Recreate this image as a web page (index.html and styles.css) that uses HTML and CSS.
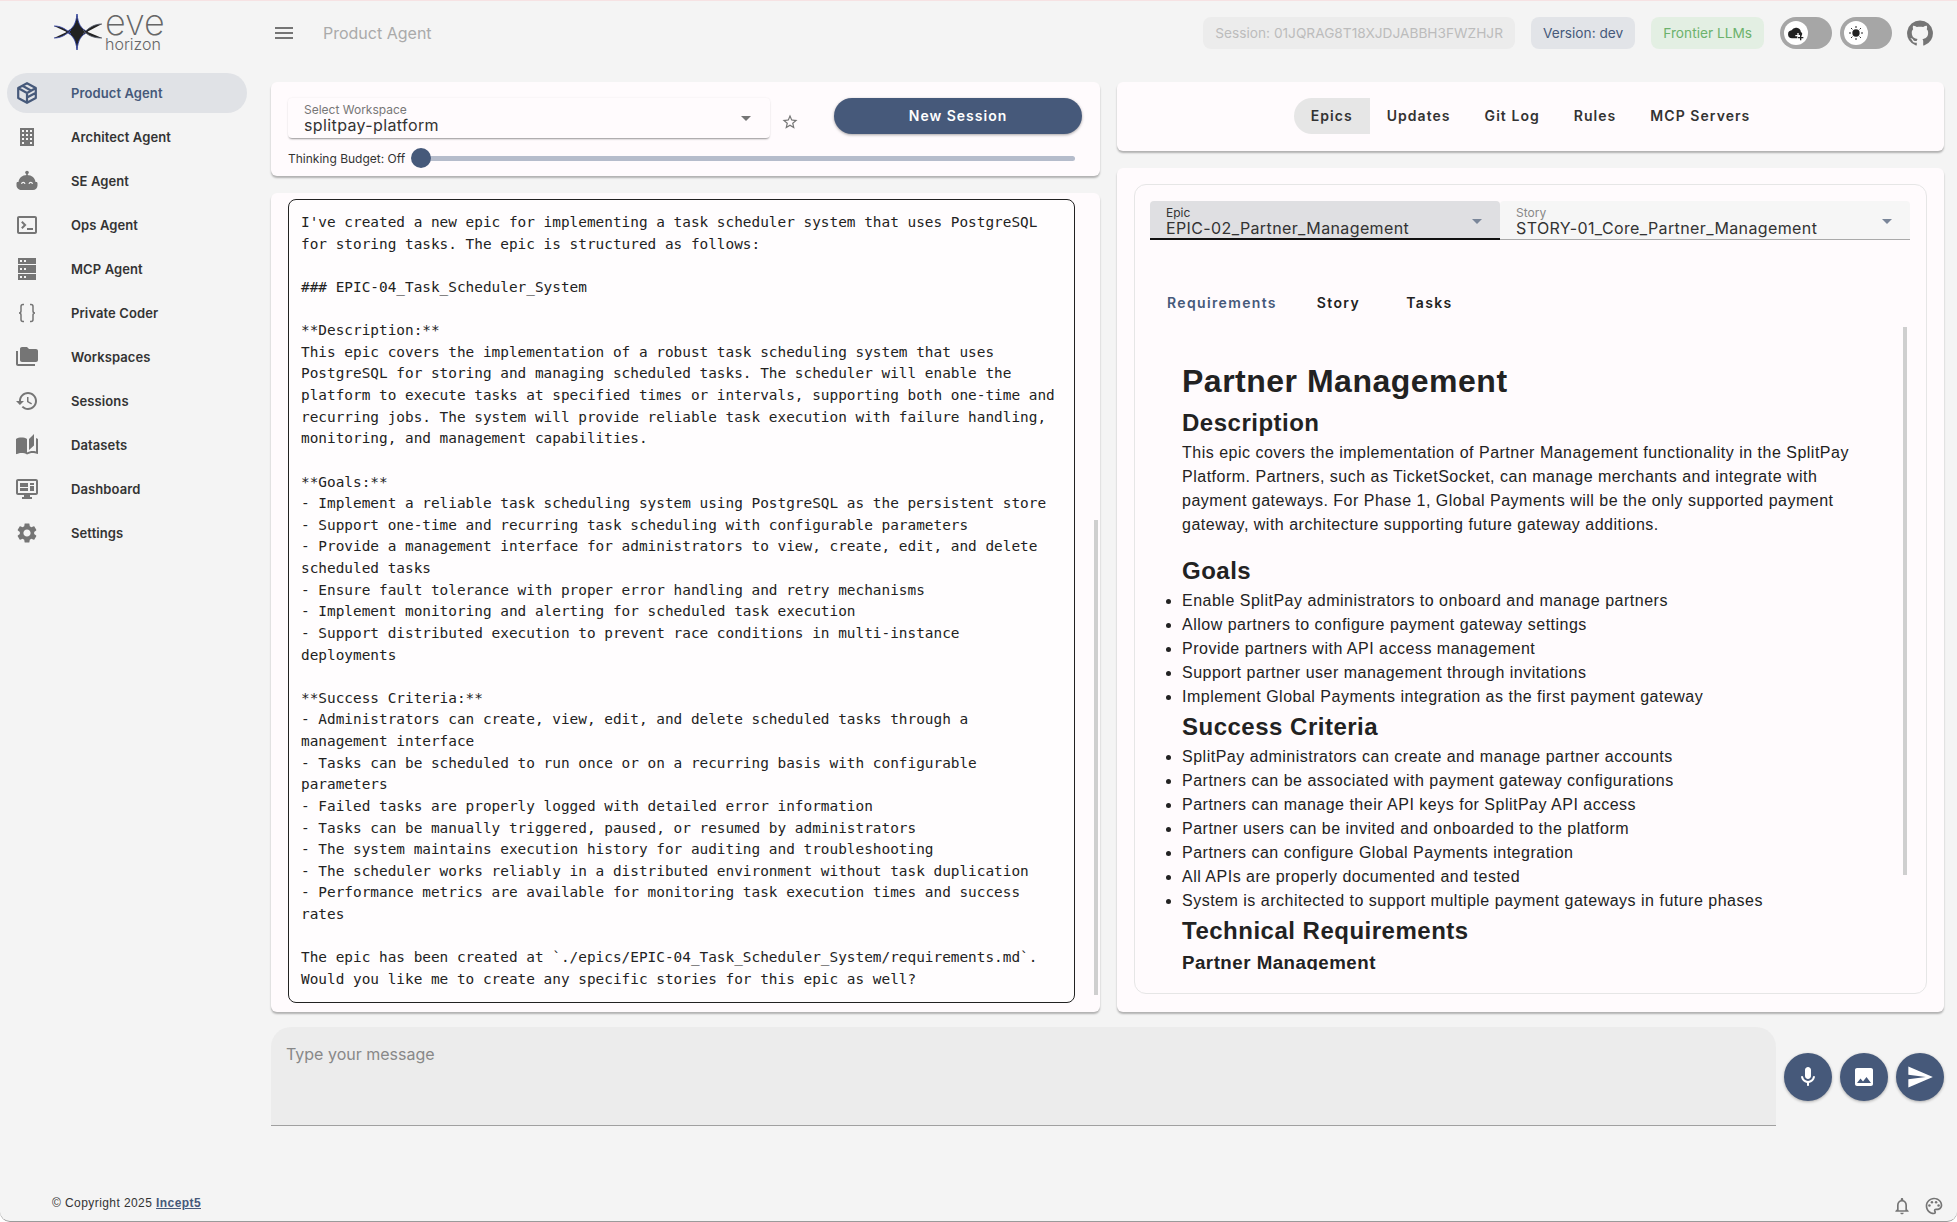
FILE: index.html
```html
<!DOCTYPE html>
<html lang="en">
<head>
<meta charset="utf-8">
<title>Eve Horizon - Product Agent</title>
<link rel="stylesheet" href="styles.css">
</head>
<body>
<div class="shell">
  <aside class="sidebar">
    <div class="logo">
      <svg class="logo-mark" viewBox="0 0 50 36" fill="none">
        <path d="M23 0C24 10 27 15 34 18C27 21 24 26 23 36C22 26 19 21 12 18C19 15 22 10 23 0Z" stroke="#2b3c9c" stroke-width=".9"/>
        <path d="M0 12C6 12 11 14 17 20" stroke="#3a49a8" stroke-width=".9"/>
        <path d="M0 24C6 24 11 22 17 16" stroke="#3a49a8" stroke-width=".9"/>
        <path d="M48 10C40 10 34 14 29 20" stroke="#555a6a" stroke-width=".9"/>
        <path d="M48 24C40 24 34 22 29 16" stroke="#555a6a" stroke-width=".9"/>
      </svg>
      <div class="logo-text">
        <span class="logo-eve">eve</span>
        <span class="logo-horizon">horizon</span>
      </div>
    </div>
    <nav class="nav">
      <a class="nav-item active">
        <svg class="nav-icon" viewBox="0 0 24 24"><path d="M12 2.200 20.800 7v10L12 21.800 3.200 17V7zM3.500 7.200 12 12l8.500-4.800M12 12v9.500M7.500 4.800l8.800 4.900M12 16.500l8-4.300" fill="none" stroke="currentColor" stroke-width="2.200" stroke-linejoin="round"/></svg>
        <span>Product Agent</span>
      </a>
      <a class="nav-item">
        <svg class="nav-icon" viewBox="0 0 24 24"><path fill-rule="evenodd" d="M5 3h14v18H5zM7 5v2h2V5zM11 5v2h2V5zM15 5v2h2V5zM7 9v2h2V9zM11 9v2h2V9zM15 9v2h2V9zM7 13v2h2v-2zM11 13v2h2v-2zM15 13v2h2v-2zM7 17v2h2v-2zM15 17v2h2v-2z"/></svg>
        <span>Architect Agent</span>
      </a>
      <a class="nav-item">
        <svg class="nav-icon" viewBox="0 0 24 24"><circle cx="12" cy="3.500" r="1.800"/><path d="M11.200 4h1.600v4h-1.600z"/><path d="M12 6c5 0 8 3 8.500 7h1.200c.3 0 .8.500.8 1.500v2c0 2.500-2 4.500-4.500 4.500H6.500C4 21 1.500 19 1.500 16.500v-2c0-1 .5-1.500.8-1.500h1.200C4 9 7 6 12 6z"/><path d="M6.500 14.800c.5-2 3-2 3.500 0M14 14.800c.5-2 3-2 3.500 0" stroke="#f4f4f4" stroke-width="1.200" fill="none"/></svg>
        <span>SE Agent</span>
      </a>
      <a class="nav-item">
        <svg class="nav-icon" viewBox="0 0 24 24"><path d="M20 3H4c-1.110 0-2 .9-2 2v14c0 1.100.89 2 2 2h16c1.100 0 2-.9 2-2V5c0-1.100-.9-2-2-2zm0 16H4V5h14v0h2v14zm-2-2h-6v-2h6v2zM7.500 16l-1.410-1.410L8.670 12 6.090 9.410 7.500 8l4 4-4 4z"/></svg>
        <span>Ops Agent</span>
      </a>
      <a class="nav-item">
        <svg class="nav-icon" viewBox="0 0 24 24"><path d="M3 23h18v-6H3v6zm2-4h2v2H5v-2zM3 1v6h18V1H3zm4 4H5V3h2v2zM3 16h18V8H3v8zm2-5h2v2H5v-2zm4-8h2v2H9V3zm0 8h2v2H9v-2zm0 8h2v2H9v-2z"/></svg>
        <span>MCP Agent</span>
      </a>
      <a class="nav-item">
        <svg class="nav-icon" viewBox="0 0 24 24"><path d="M9 3.500H8C6.500 3.500 6 4.500 6 5.500v4.500c0 1.200-.8 2-2 2 1.200 0 2 .8 2 2v4.500c0 1 .5 2 2 2h1M15 3.500h1c1.500 0 2 1 2 2v4.500c0 1.200.8 2 2 2-1.200 0-2 .8-2 2v4.500c0 1-.5 2-2 2h-1" fill="none" stroke="currentColor" stroke-width="1.500"/></svg>
        <span>Private Coder</span>
      </a>
      <a class="nav-item">
        <svg class="nav-icon" viewBox="0 0 24 24"><path d="M3 19h17v2H3c-1.100 0-2-.9-2-2V6h2v13zM23 6v9c0 1.100-.9 2-2 2H7c-1.100 0-2-.9-2-2l.01-11c0-1.100.89-2 1.990-2h5l2 2h7c1.100 0 2 .9 2 2z"/></svg>
        <span>Workspaces</span>
      </a>
      <a class="nav-item">
        <svg class="nav-icon" viewBox="0 0 24 24"><path d="M13 3c-4.970 0-9 4.030-9 9H1l3.890 3.890.07.14L9 12H6c0-3.870 3.130-7 7-7s7 3.130 7 7-3.130 7-7 7c-1.930 0-3.680-.79-4.940-2.060l-1.420 1.420C8.270 19.990 10.510 21 13 21c4.970 0 9-4.030 9-9s-4.030-9-9-9zm-1 5v5l4.280 2.540.72-1.210-3.500-2.080V8H12z"/></svg>
        <span>Sessions</span>
      </a>
      <a class="nav-item">
        <svg class="nav-icon" viewBox="0 0 24 24"><path d="M19 1l-5 5v11l5-4.500V1zM1 6v14.650c0 .25.25.5.5.5.1 0 .15-.05.25-.05C3.100 20.450 5.050 20 6.500 20c1.950 0 4.050.4 5.500 1.500V6c-1.450-1.100-3.550-1.500-5.500-1.500S2.450 4.900 1 6zm22 13.500V6c-.6-.45-1.250-.8-2-1v13.500c-1.100-.35-2.300-.5-3.500-.5-1.700 0-4.150.65-5.500 1.500v2c1.350-.85 3.800-1.500 5.500-1.500 1.650 0 3.350.3 4.750 1.050.1.05.15.05.25.05.25 0 .5-.25.5-.5v-1z"/></svg>
        <span>Datasets</span>
      </a>
      <a class="nav-item">
        <svg class="nav-icon" viewBox="0 0 24 24"><path d="M21 2H3C1.900 2 1 2.900 1 4v12c0 1.100.9 2 2 2h6v2H7v2h10v-2h-2v-2h6c1.100 0 2-.9 2-2V4c0-1.100-.9-2-2-2zm0 14H3V4h18v12zM5 6h8v4H5V6zm10 0h4v2h-4V6zm0 3h4v5h-4V9zM5 11h8v3H5v-3z"/></svg>
        <span>Dashboard</span>
      </a>
      <a class="nav-item">
        <svg class="nav-icon" viewBox="0 0 24 24"><path d="M19.140 12.940c.04-.3.06-.61.06-.94 0-.32-.02-.64-.07-.94l2.030-1.580c.18-.14.23-.41.12-.61l-1.920-3.320c-.12-.22-.37-.29-.59-.22l-2.390.96c-.5-.38-1.030-.7-1.620-.94l-.36-2.540c-.04-.24-.24-.41-.48-.41h-3.840c-.24 0-.43.17-.47.41l-.36 2.540c-.59.24-1.130.57-1.620.94l-2.390-.96c-.22-.08-.47 0-.59.22L2.740 8.870c-.12.21-.08.47.12.61l2.030 1.580c-.05.3-.09.63-.09.94s.02.64.07.94l-2.030 1.580c-.18.14-.23.41-.12.61l1.920 3.320c.12.22.37.29.59.22l2.390-.96c.5.38 1.030.7 1.620.94l.36 2.540c.05.24.24.41.48.41h3.840c.24 0 .44-.17.47-.41l.36-2.540c.59-.24 1.130-.56 1.620-.94l2.390.96c.22.08.47 0 .59-.22l1.920-3.320c.12-.22.07-.47-.12-.61l-2.010-1.580zM12 15.600c-1.980 0-3.600-1.620-3.600-3.600s1.620-3.600 3.600-3.600 3.600 1.620 3.600 3.600-1.620 3.600-3.600 3.600z"/></svg>
        <span>Settings</span>
      </a>
    </nav>
    <footer class="copyright">© Copyright 2025 <a class="copyright-link">Incept5</a></footer>
  </aside>

  <main class="main">
    <header class="topbar">
      <svg class="menu-icon" viewBox="0 0 24 24"><path d="M3 18h18v-2H3v2zm0-5h18v-2H3v2zm0-7v2h18V6H3z"/></svg>
      <h1 class="page-title">Product Agent</h1>
      <div class="topbar-right">
        <span class="chip chip-session">Session: 01JQRAG8T18XJDJABBH3FWZHJR</span>
        <span class="chip chip-version">Version: dev</span>
        <span class="chip chip-llm">Frontier LLMs</span>
        <span class="toggles">
          <span class="toggle"><span class="toggle-thumb">
            <svg class="toggle-icon" viewBox="0 0 24 24"><path d="M19.400 10.040A7.500 7.500 0 0 0 5.400 8.040 6 6 0 0 0 6 20h8v-3h-3v-2h3v-3h2v3h3v1.900a5 5 0 0 0 2.400-3.900 5 5 0 0 0-2.600-3z"/><path d="M18 18v-3h2v3h3v2h-3v3h-2v-3h-3v-2z"/></svg>
          </span></span>
          <span class="toggle"><span class="toggle-thumb">
            <svg class="toggle-icon" viewBox="0 0 24 24"><circle cx="12" cy="12" r="5.500"/><path d="M12 1.500v3M12 19.500v3M1.500 12h3M19.500 12h3M4.600 4.600l2 2M17.400 17.400l2 2M4.600 19.400l2-2M17.400 6.600l2-2" stroke="#222" stroke-width="1.500"/></svg>
          </span></span>
        </span>
        <svg class="github-icon" viewBox="0 0 24 24"><path d="M12 1.270a11 11 0 0 0-3.480 21.460c.55.09.73-.28.73-.55v-1.840c-3.030.64-3.670-1.460-3.670-1.460-.55-1.290-1.280-1.650-1.280-1.650-.92-.65.1-.65.1-.65 1.100 0 1.730 1.100 1.730 1.100.92 1.650 2.570 1.200 3.210.92a2 2 0 0 1 .64-1.470c-2.470-.27-5.040-1.190-5.040-5.500 0-1.100.46-2.100 1.200-2.840a3.760 3.760 0 0 1 0-2.930s.91-.28 3.110 1.100c1.800-.49 3.700-.49 5.500 0 2.100-1.380 3.020-1.100 3.020-1.100a3.760 3.760 0 0 1 0 2.930c.83.74 1.200 1.740 1.200 2.940 0 4.210-2.570 5.130-5.040 5.400.45.37.82.92.82 2.020v3.030c0 .27.1.64.73.55A11 11 0 0 0 12 1.270"/></svg>
      </div>
    </header>

    <div class="workspace">
      <section class="column">
        <div class="panel controls">
          <div class="controls-row">
            <div class="select select-raised">
              <div class="select-text">
                <span class="select-label">Select Workspace</span>
                <span class="select-value">splitpay-platform</span>
              </div>
              <span class="caret"></span>
            </div>
            <svg class="star-icon" viewBox="0 0 24 24"><path d="M22 9.240l-7.190-.62L12 2 9.190 8.630 2 9.240l5.460 4.730L5.820 21 12 17.270 18.180 21l-1.630-7.030L22 9.240zM12 15.400l-3.760 2.270 1-4.280-3.320-2.880 4.380-.38L12 6.100l1.710 4.040 4.380.38-3.320 2.880 1 4.280L12 15.400z"/></svg>
            <button class="new-session">New Session</button>
          </div>
          <div class="budget">
            <span class="budget-label">Thinking Budget: Off</span>
            <div class="slider"><span class="slider-thumb"></span></div>
          </div>
        </div>
        <div class="panel chat">
          <div class="message">I've created a new epic for implementing a task scheduler system that uses PostgreSQL for storing tasks. The epic is structured as follows:

### EPIC-04_Task_Scheduler_System

**Description:**
This epic covers the implementation of a robust task scheduling system that uses PostgreSQL for storing and managing scheduled tasks. The scheduler will enable the platform to execute tasks at specified times or intervals, supporting both one-time and recurring jobs. The system will provide reliable task execution with failure handling, monitoring, and management capabilities.

**Goals:**
- Implement a reliable task scheduling system using PostgreSQL as the persistent store
- Support one-time and recurring task scheduling with configurable parameters
- Provide a management interface for administrators to view, create, edit, and delete scheduled tasks
- Ensure fault tolerance with proper error handling and retry mechanisms
- Implement monitoring and alerting for scheduled task execution
- Support distributed execution to prevent race conditions in multi-instance deployments

**Success Criteria:**
- Administrators can create, view, edit, and delete scheduled tasks through a management interface
- Tasks can be scheduled to run once or on a recurring basis with configurable parameters
- Failed tasks are properly logged with detailed error information
- Tasks can be manually triggered, paused, or resumed by administrators
- The system maintains execution history for auditing and troubleshooting
- The scheduler works reliably in a distributed environment without task duplication
- Performance metrics are available for monitoring task execution times and success rates

The epic has been created at `./epics/EPIC-04_Task_Scheduler_System/requirements.md`. Would you like me to create any specific stories for this epic as well?</div>
          <span class="chat-scrollbar"></span>
        </div>
      </section>

      <section class="column">
        <div class="panel tabs-panel">
          <div class="segmented">
            <span class="segment selected">Epics</span>
            <span class="segment">Updates</span>
            <span class="segment">Git Log</span>
            <span class="segment">Rules</span>
            <span class="segment">MCP Servers</span>
          </div>
        </div>
        <div class="panel detail">
          <div class="detail-card">
            <div class="pickers">
              <div class="select select-filled focused">
                <div class="select-text">
                  <span class="select-label">Epic</span>
                  <span class="select-value">EPIC-02_Partner_Management</span>
                </div>
                <span class="caret caret-blue"></span>
              </div>
              <div class="select select-filled story">
                <div class="select-text">
                  <span class="select-label">Story</span>
                  <span class="select-value">STORY-01_Core_Partner_Management</span>
                </div>
                <span class="caret caret-blue"></span>
              </div>
            </div>
            <div class="doc-tabs">
              <span class="doc-tab current">Requirements</span>
              <span class="doc-tab">Story</span>
              <span class="doc-tab">Tasks</span>
            </div>
            <article class="doc">
              <h1>Partner Management</h1>
              <h2>Description</h2>
              <p>This epic covers the implementation of Partner Management functionality in the SplitPay Platform. Partners, such as TicketSocket, can manage merchants and integrate with payment gateways. For Phase 1, Global Payments will be the only supported payment gateway, with architecture supporting future gateway additions.</p>
              <h2>Goals</h2>
              <ul>
                <li>Enable SplitPay administrators to onboard and manage partners</li>
                <li>Allow partners to configure payment gateway settings</li>
                <li>Provide partners with API access management</li>
                <li>Support partner user management through invitations</li>
                <li>Implement Global Payments integration as the first payment gateway</li>
              </ul>
              <h2>Success Criteria</h2>
              <ul>
                <li>SplitPay administrators can create and manage partner accounts</li>
                <li>Partners can be associated with payment gateway configurations</li>
                <li>Partners can manage their API keys for SplitPay API access</li>
                <li>Partner users can be invited and onboarded to the platform</li>
                <li>Partners can configure Global Payments integration</li>
                <li>All APIs are properly documented and tested</li>
                <li>System is architected to support multiple payment gateways in future phases</li>
              </ul>
              <h2>Technical Requirements</h2>
              <h3>Partner Management</h3>
              <span class="doc-scrollbar"></span>
            </article>
          </div>
        </div>
      </section>
    </div>

    <div class="composer-row">
      <div class="composer">Type your message</div>
      <button class="fab"><svg class="fab-icon" viewBox="0 0 24 24"><path d="M12 14c1.660 0 3-1.340 3-3V5c0-1.660-1.340-3-3-3S9 3.340 9 5v6c0 1.660 1.340 3 3 3zm5.910-3c-.49 0-.9.36-.98.85C16.520 14.200 14.470 16 12 16s-4.520-1.800-4.930-4.150c-.08-.49-.49-.85-.98-.85-.61 0-1.090.54-1 1.140.49 3 2.890 5.350 5.910 5.780V20c0 .55.45 1 1 1s1-.45 1-1v-2.080c3.020-.43 5.420-2.780 5.910-5.780.1-.6-.39-1.140-1-1.140z"/></svg></button>
      <button class="fab"><svg class="fab-icon" viewBox="0 0 24 24"><path d="M21 19V5c0-1.100-.9-2-2-2H5c-1.100 0-2 .9-2 2v14c0 1.100.9 2 2 2h14c1.100 0 2-.9 2-2zM8.500 13.500l2.500 3.010L14.500 12l4.500 6H5l3.500-4.500z"/></svg></button>
      <button class="fab"><svg class="fab-icon send" viewBox="0 0 24 24"><path d="M2.010 21 23 12 2.010 3 2 10l15 2-15 2z"/></svg></button>
    </div>

    <div class="corner-actions">
      <svg class="corner-icon" viewBox="0 0 24 24"><path d="M12 22c1.100 0 2-.9 2-2h-4c0 1.100.9 2 2 2zm6-6v-5c0-3.070-1.630-5.640-4.500-6.320V4c0-.83-.67-1.500-1.500-1.500s-1.500.67-1.500 1.500v.68C7.640 5.360 6 7.920 6 11v5l-2 2v1h16v-1l-2-2zm-2 1H8v-6c0-2.480 1.510-4.500 4-4.500s4 2.020 4 4.500v6z"/></svg>
      <svg class="corner-icon" viewBox="0 0 24 24"><path d="M12 22C6.490 22 2 17.510 2 12S6.490 2 12 2s10 4.040 10 9c0 3.310-2.690 6-6 6h-1.770c-.28 0-.5.22-.5.5 0 .12.050.23.130.33.410.47.640 1.060.640 1.670A2.500 2.500 0 0 1 12 22zm0-18c-4.410 0-8 3.590-8 8s3.590 8 8 8c.28 0 .5-.22.5-.5a.54.54 0 0 0-.14-.35c-.41-.46-.63-1.050-.63-1.650a2.500 2.500 0 0 1 2.500-2.500H16c2.210 0 4-1.790 4-4 0-3.860-3.590-7-8-7z"/><circle cx="6.500" cy="11.500" r="1.500"/><circle cx="9.500" cy="7.500" r="1.500"/><circle cx="14.500" cy="7.500" r="1.500"/><circle cx="17.500" cy="11.500" r="1.500"/></svg>
    </div>
  </main>
</div>
</body>
</html>
```
FILE: styles.css
```css
* { box-sizing: border-box; }
html, body { margin: 0; height: 100%; background: #fff; overflow: hidden; }
body { font-family: "Inter", "Liberation Sans", sans-serif; color: #222; }
svg { display: block; fill: currentColor; flex: none; }

.shell {
  display: flex;
  height: 1222px;
  background: #f4f4f4;
  border-top: 1px solid #f6e2e3;
  border-bottom: 1px solid #9a9a9a;
  border-radius: 0 0 10px 10px;
}

/* Sidebar */
.sidebar { width: 271px; flex: none; display: flex; flex-direction: column; }
.logo { height: 72px; flex: none; display: flex; padding: 13px 0 0 54px; }
.logo-mark { width: 50px; height: 36px; }
.logo-text { display: flex; flex-direction: column; margin-left: 1px; color: #666; }
.logo-eve { font-size: 36px; line-height: 20px; font-weight: 200; height: 20px; margin-top: -2px; }
.logo-horizon { font-size: 16px; line-height: 15px; font-weight: 300; margin-top: 5px; }
.nav { display: flex; flex-direction: column; gap: 4px; padding-left: 7px; }
.nav-item {
  width: 240px; height: 40px; border-radius: 20px;
  display: flex; align-items: center; padding: 0 0 1px 8px;
  font-size: 13px; font-weight: 600; color: #333; letter-spacing: .1px;
}
.nav-item span { margin-left: 32px; }
.nav-icon { width: 24px; height: 24px; color: #757575; }
.nav-item.active { background: #e0e2e6; color: #46597a; }
.nav-item.active .nav-icon { color: #46597a; }
.copyright { margin-top: auto; padding: 0 0 10px 52px; font: 12px/16px "Liberation Sans", sans-serif; color: #333; letter-spacing: .42px; }
.copyright-link { color: #46597a; font-weight: 700; text-decoration: underline; }

/* Main column */
.main { flex: 1; min-width: 0; display: flex; flex-direction: column; padding-right: 13px; }
.topbar { height: 81px; flex: none; display: flex; align-items: center; padding: 0 10px 17px 1px; }
.menu-icon { width: 24px; height: 24px; color: #757575; }
.page-title { margin: 0 0 0 27px; font-size: 16px; font-weight: 400; color: #aaa; }
.topbar-right { margin-left: auto; display: flex; align-items: center; gap: 16px; }
.chip { height: 32px; display: flex; align-items: center; padding: 0 12px; border-radius: 8px; font-size: 13.7px; }
.chip-session { background: #ececec; color: #bcbcbc; }
.chip-version { background: #e2e4e8; color: #46597a; }
.chip-llm { background: #e3efe3; color: #6cb26c; }
.toggles { display: flex; gap: 8px; }
.toggle { width: 52px; height: 32px; border-radius: 16px; background: #a6a6a6; display: flex; align-items: center; padding-left: 4px; }
.toggle-thumb { width: 24px; height: 24px; border-radius: 50%; background: #fff; display: flex; align-items: center; justify-content: center; }
.toggle-icon { width: 16px; height: 16px; color: #222; }
.github-icon { width: 28px; height: 28px; color: #757575; margin-left: -2px; }

.workspace { display: grid; grid-template-columns: 829px 827px; column-gap: 17px; height: 930px; flex: none; }
.column { display: flex; flex-direction: column; gap: 17px; min-height: 0; }
.panel { background: #fffbfd; border-radius: 6px; box-shadow: 0 2px 2px rgba(0,0,0,.28); }

/* Controls */
.controls { height: 94px; flex: none; padding: 16px 17px 0 17px; }
.controls-row { display: flex; align-items: flex-start; }
.select { position: relative; display: flex; align-items: center; }
.select-raised { width: 482px; height: 40px; border-radius: 4px; background: #fffbfd; box-shadow: 0 2px 2px -1px rgba(0,0,0,.4), 0 0 2px rgba(0,0,0,.08); padding: 1px 16px 0; }
.select-text { display: flex; flex-direction: column; flex: 1; min-width: 0; }
.select-label { font-size: 12px; line-height: 14px; color: #777; }
.select-value { font-size: 16px; line-height: 17px; color: #333; letter-spacing: .38px; }
.caret { width: 0; height: 0; border-left: 5px solid transparent; border-right: 5px solid transparent; border-top: 5px solid #757575; margin-right: 3px; }
.caret-blue { border-top-color: #7a8699; margin-right: 2px; }
.star-icon { width: 18px; height: 18px; margin: 15px 0 0 11px; color: #757575; }
.new-session {
  width: 248px; height: 36px; margin-left: 35px; border: 0; border-radius: 18px; padding: 0 0 2px;
  background: #46597a; color: #fff; font: 600 14px "Inter", sans-serif; letter-spacing: 1px;
  box-shadow: 0 1px 3px rgba(0,0,0,.35);
}
.budget { display: flex; align-items: center; margin-top: 10px; height: 20px; }
.budget-label { width: 123px; font-size: 12px; color: #333; }
.slider { position: relative; flex: none; width: 654px; height: 5px; margin-left: 10px; background: #b5bccb; border-radius: 3px; }
.slider-thumb { position: absolute; left: -10px; top: -8px; width: 20px; height: 20px; border-radius: 50%; background: #46597a; }

/* Chat */
.chat { position: relative; flex: 1; min-height: 0; padding: 6px 25px 9px 17px; }
.message {
  height: 100%; border: 1px solid #222; border-radius: 8px; padding: 12px 11px 0 12px; overflow: hidden;
  font: 14.4px/21.62px "DejaVu Sans Mono", monospace; color: #222; white-space: pre-wrap; background: #fffdfe;
}
.chat-scrollbar { position: absolute; left: 823px; top: 327px; width: 4px; height: 475px; background: #cfcfcf; }

/* Right column */
.tabs-panel { height: 69px; flex: none; display: flex; justify-content: center; padding-top: 16px; }
.segmented { display: flex; height: 36px; }
.segment { display: flex; align-items: center; padding: 0 17px 2px; font-size: 14px; font-weight: 600; letter-spacing: 1.05px; color: #333; }
.segment.selected { background: #e6e6e6; border-radius: 18px 0 0 18px; }
.detail { flex: 1; min-height: 0; padding: 16px 17px 18px 17px; }
.detail-card { height: 100%; border: 1px solid #e6e6e6; border-radius: 12px; padding: 16px 15px 0; display: flex; flex-direction: column; }
.pickers { display: flex; flex: none; }
.select-filled { height: 39px; padding: 2px 16px 0; background: #f6f6f6; border-bottom: 1px solid #aaa; border-radius: 4px 4px 0 0; color: #333; }
.select-filled.focused { width: 350px; padding-top: 3px; background: #dfdfe2; border-bottom: 2px solid #111; }
.select-filled.story { width: 410px; }
.select-filled .select-label { color: #333; }
.select-filled.story .select-label { color: #888; }
.doc-tabs { display: flex; height: 48px; margin-top: 39px; flex: none; align-items: center; padding: 0 0 1px 1px; }
.doc-tab { min-width: 91px; padding: 0 16px; text-align: center; font-size: 14px; font-weight: 600; letter-spacing: 1.35px; color: #222; }
.doc-tab.current { color: #46597a; }
.doc {
  position: relative; flex: none; height: 643px; overflow: hidden; margin: 0; padding: 35px 45px 0 32px;
  font: 16px/24px "Liberation Sans", sans-serif; letter-spacing: .5px; color: #222;
}
.doc h1 { margin: 0; font-size: 32px; line-height: 38px; font-weight: 700; }
.doc h2 { margin: 8px 0 4px; font-size: 24px; line-height: 29px; font-weight: 700; }
.doc p { margin: 0 0 16px; }
.doc p + h2 { margin-top: 19px; }
.doc ul + h2 { margin-top: 3px; }
.doc ul { margin: 0; padding: 0; }
.doc li { margin: 0; list-style: disc; }
.doc h3 { margin: 7px 0 0; font-size: 18.7px; line-height: 22px; font-weight: 700; }
.doc-scrollbar { position: absolute; right: 4px; top: 0; width: 4px; height: 548px; background: #cfcfcf; }

/* Composer */
.composer-row { display: flex; align-items: center; gap: 8px; margin-top: 15px; height: 99px; flex: none; }
.composer {
  width: 1505px; height: 99px; flex: none; padding: 16px 15px 0; background: #ececec;
  border-bottom: 1px solid #a0a0a0; border-radius: 20px 20px 0 0;
  font-size: 16px; line-height: 22px; color: #888;
}
.fab { width: 48px; height: 48px; flex: none; border: 0; padding: 0; border-radius: 50%; background: #46597a; color: #fff; display: flex; align-items: center; justify-content: center; box-shadow: 0 1px 3px rgba(0,0,0,.3); }
.fab-icon { width: 24px; height: 24px; }
.fab-icon.send { width: 28px; height: 28px; }

.corner-actions { margin-top: auto; display: flex; justify-content: flex-end; gap: 12px; padding-bottom: 5px; }
.corner-icon { width: 20px; height: 20px; color: #757575; }
```
